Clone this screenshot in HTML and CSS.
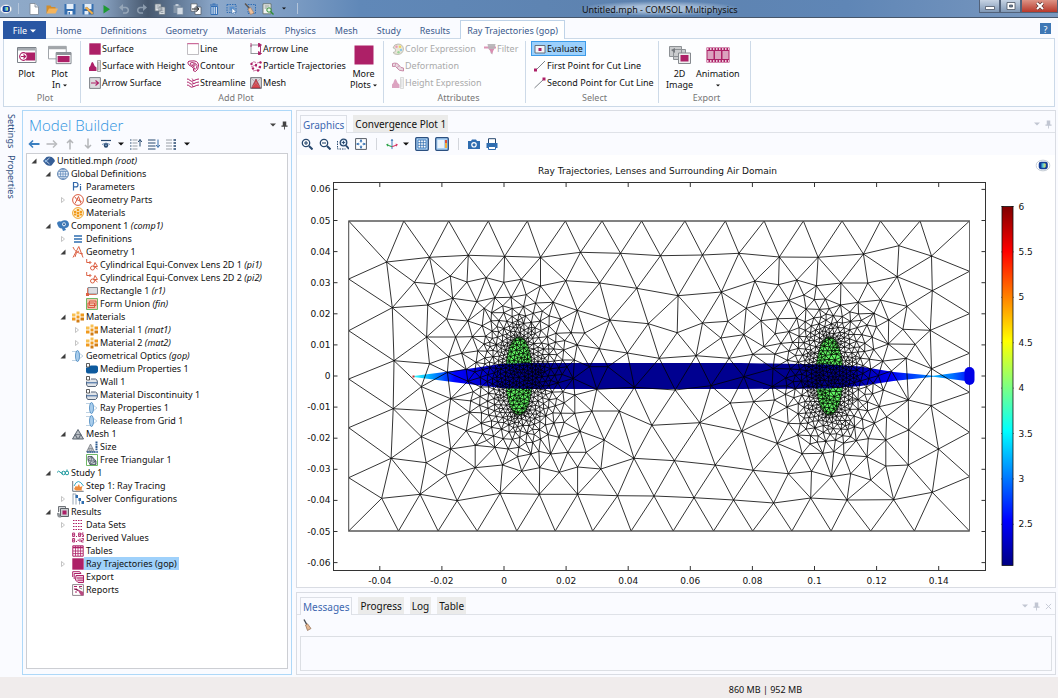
FILE: index.html
```html
<!DOCTYPE html>
<html lang="en">
<head>
<meta charset="utf-8">
<title>Untitled.mph - COMSOL Multiphysics</title>
<link rel="stylesheet" href="styles.css">
</head>
<body>
<svg class="defs" aria-hidden="true">
  <defs>
    <linearGradient id="screen"><stop offset="0" stop-color="#0a2f9a"/><stop offset=".5" stop-color="#58d0e0"/><stop offset="1" stop-color="#f2e04a"/></linearGradient>
    <symbol id="i-logo" viewBox="0 0 14 12"><ellipse cx="7" cy="6" rx="6.500" ry="5" fill="#fff" stroke="#b9c2cd" stroke-width=".8"/><rect x="3" y="2.500" width="8.500" height="7" rx="2" fill="#123c96"/><rect x="4.500" y="3.800" width="5" height="4.200" rx="1" fill="url(#screen)"/></symbol>
    <symbol id="i-new" viewBox="0 0 12 12"><path d="M2 .5h5l3.500 3.500v7.500h-8.500z" fill="#fff" stroke="#7b8794" stroke-width=".8"/><path d="M7 .5v3.500h3.500" fill="#dde3ea" stroke="#7b8794" stroke-width=".8"/></symbol>
    <symbol id="i-open" viewBox="0 0 12 12"><path d="M.5 10.500V2.500h4l1 1.500h4v2" fill="#d08c2c"/><path d="M.5 10.500L3 5.500h9l-2.500 5z" fill="#f4b45c"/></symbol>
    <symbol id="i-save" viewBox="0 0 12 12"><path d="M.5 1h11v10.500h-11z" fill="#356fb0"/><path d="M2.500 1h7v5h-7z" fill="#e4eef8"/><path d="M3.500 8h5v3.500h-5z" fill="#fff"/><path d="M4.500 9h1.500v2.500h-1.500z" fill="#356fb0"/></symbol>
    <symbol id="i-saveas" viewBox="0 0 12 12"><path d="M.5 1h11v10.500h-11z" fill="#356fb0"/><path d="M2.500 1h7v5h-7zM2.500 8h4v3.500h-4z" fill="#e4eef8"/><path d="M3 5l2-1 6.500 6-1.500 1.500z" fill="#f5b44d" stroke="#9d6c2b" stroke-width=".4"/></symbol>
    <symbol id="i-run" viewBox="0 0 12 12"><path d="M3.500 2l6.500 4.300-6.500 4.300z" fill="#1d9a32"/></symbol>
    <symbol id="i-undo" viewBox="0 0 12 12"><path d="M3 4.500h5a2.800 2.800 0 010 5.500h-3" fill="none" stroke="#96a6b8" stroke-width="1.500"/><path d="M1 4.500l4-3.500v7z" fill="#96a6b8"/></symbol>
    <symbol id="i-redo" viewBox="0 0 12 12"><path d="M9 4.500h-5a2.800 2.800 0 000 5.500h3" fill="none" stroke="#8c9cae" stroke-width="1.500"/><path d="M11 4.500l-4-3.500v7z" fill="#8c9cae"/></symbol>
    <symbol id="i-copy" viewBox="0 0 12 12"><path d="M1 1h6v7h-6zM5 4h6v7.500h-6z" fill="#dfe3e7" stroke="#6a7682" stroke-width=".8"/><path d="M6.500 6h3M6.500 7.800h3M6.500 9.600h3M2.500 3h3M2.500 5h2" stroke="#6a7682" stroke-width=".7"/></symbol>
    <symbol id="i-paste" viewBox="0 0 12 12"><path d="M1.500 2h7v8h-7z" fill="#8495a8"/><path d="M3.500 1h3v2h-3z" fill="#c0cbd7"/><path d="M5 4.500h6v7h-6z" fill="#d3dbe4" stroke="#7d8fa3" stroke-width=".7"/></symbol>
    <symbol id="i-dup" viewBox="0 0 12 12"><path d="M1 .8h6v7.500h-6zM5 4h6v7.500h-6z" fill="#fff" stroke="#57616c" stroke-width=".8"/><path d="M2 6h6M6.500 4l2.500 2-2.500 2" fill="none" stroke="#222" stroke-width="1"/></symbol>
    <symbol id="i-trash" viewBox="0 0 12 12"><path d="M2 2h8M4.500 1h3" stroke="#326fb6"/><path d="M3 3.500h6.500v8H3z" fill="#d5e2f1" stroke="#326fb6"/><path d="M5.100 3.500v8M7.300 3.500v8" fill="none" stroke="#326fb6" stroke-width="1"/></symbol>
    <symbol id="i-sel" viewBox="0 0 12 12"><rect x="1" y="1.500" width="9" height="8" fill="none" stroke="#2f6db5" stroke-dasharray="1.500 1"/><path d="M3.500 3.500h5v4h-5z" fill="#5c92cf"/><path d="M6 5v6l1.500-1.500 1 2 1-.5-1-2h2z" fill="#fff" stroke="#3b6ea8" stroke-width=".5"/></symbol>
    <symbol id="i-clear" viewBox="0 0 12 12"><path d="M4 1.500h7.500v9H4z" fill="none" stroke="#2f6db5" stroke-dasharray="1.500 1"/><path d="M1 .5l4.500 5" stroke="#5d554f" stroke-width="1.400"/><path d="M4 6l2.500-1.500 3.500 5.500-3.500 1.500z" fill="#eec19b" stroke="#a77a58" stroke-width=".6"/></symbol>
    <symbol id="i-broom" viewBox="0 0 12 12"><path d="M2 .5l3 5.500" stroke="#474b52" stroke-width="1.400"/><path d="M3.500 6l2-1.200 3.500 4.700-3.500 2z" fill="#e6b893" stroke="#8d6a4e" stroke-width=".7"/></symbol>
    <symbol id="i-find" viewBox="0 0 12 12"><path d="M1 .8h8v10h-8z" fill="#f2f4f2" stroke="#5d6a60" stroke-width=".8"/><path d="M2.500 3h5M2.500 5h3" stroke="#6b7a6e" stroke-width=".8"/><circle cx="7" cy="7" r="2.200" fill="#e2f3e2" stroke="#2f8b35"/><path d="M8.500 8.500l3 3" stroke="#2f8b35" stroke-width="1.400"/></symbol>
    <symbol id="i-plot" viewBox="0 0 20 18"><path d="M.5 1.500h18.500v15h-18.500z" fill="#fff" stroke="#7c8289"/><path d="M1 2h17.500v2.500h-17.500z" fill="#a5aab0"/><path d="M9 6.500h9v8h-9z" fill="#ad2067"/><circle cx="6.500" cy="10.500" r="3.800" fill="#fff" stroke="#ad2067" stroke-width="1.200"/><path d="M4 10.500h4M6.500 8.500l2 2-2 2" fill="none" stroke="#ad2067" stroke-width="1.200"/></symbol>
    <symbol id="i-plotin" viewBox="0 0 25 20"><path d="M.5 1h18.500v13h-18.500z" fill="#fff" stroke="#9a9fa4"/><path d="M.5 1h18.500v3h-18.500z" fill="#a2a6aa"/><path d="M8.500 7.500h15.500v11.500h-15.500z" fill="#fff" stroke="#7c8289"/><path d="M8.500 7.500h15.500v2.500h-15.500z" fill="#8f9499"/><path d="M10 11h12.500v6.500h-12.500z" fill="#ad2067"/></symbol>
    <symbol id="i-surface" viewBox="0 0 12 12"><path d="M.3 .3h11.400v11.400h-11.400z" fill="#ad2067"/></symbol>
    <symbol id="i-height" viewBox="0 0 12 12"><path d="M0 11V7.500q1.500-1 2-3.500 1.300-4 2.800 0 .5 2.500 2.700 3.500V11z" fill="#ad2067"/><path d="M8.500.5h3v11h-3z" fill="#e2e2e2" stroke="#888" stroke-width=".7"/><path d="M8.500 3h2M8.500 5h2M8.500 7h2M8.500 9h2" stroke="#777" stroke-width=".6"/></symbol>
    <symbol id="i-arrows" viewBox="0 0 12 12"><path d="M.6 .6h10.800v10.800h-10.800z" fill="#dcdcdf" stroke="#7e8388"/><path d="M2 6h7M6.500 3.500l3 2.500-3 2.500" fill="none" stroke="#ad2067" stroke-width="1.100"/></symbol>
    <symbol id="i-line" viewBox="0 0 12 12"><path d="M11.500 1v10.500h-11v-10.500" fill="#fff" stroke="#b0adb2" stroke-width=".8"/><path d="M.2 .7h11.600" stroke="#c04a84"/></symbol>
    <symbol id="i-contour" viewBox="0 0 12 12"><path d="M2 5q-3-4 2-4 7-1 7.500 4 0 5-3 6.500-3 0-2-3-1-2-4.500-3.500z" fill="none" stroke="#ad2067"/><path d="M3.500 4.500q-1-2 1.500-2 4.500 0 5 3 0 3-2 4-1-2-2-3.500z" fill="none" stroke="#ad2067" stroke-width=".9"/><circle cx="7" cy="5" r="1.200" fill="none" stroke="#ad2067" stroke-width=".9"/></symbol>
    <symbol id="i-stream" viewBox="0 0 12 12"><path d="M0 2q2 0 3 1.500t4 0T12 2M0 5q2 0 3 1.500t4 0T12 5M0 8q2 0 3 1.500t4 0T12 8" fill="none" stroke="#ad2067"/><path d="M5 1.500l1.500 2M5 4.500l1.500 2M5 8l1.500 2" stroke="#ad2067" stroke-width=".8"/></symbol>
    <symbol id="i-arrowline" viewBox="0 0 12 12"><path d="M1 11V2h10M1 10.500h9.500v-8" fill="none" stroke="#888b90" stroke-width=".9"/><path d="M8.500 0l3 2-3 2zM8.500 8.500l3 2-3 2zM1 0v4M10.500 3v6" fill="#ad2067" stroke="#ad2067" stroke-width=".8"/></symbol>
    <symbol id="i-particle" viewBox="0 0 12 12"><path d="M1 3.500q3-3 5-1M1 7q4-3 6 0M3 11q3-1 7-1M7 3l4-1M8 7l3 1" fill="none" stroke="#c25a90" stroke-width=".8"/><g fill="#ad2067"><circle cx="1.500" cy="4" r="1.200"/><circle cx="6" cy="5" r="1.200"/><circle cx="10.500" cy="2.500" r="1.200"/><circle cx="3" cy="8.500" r="1.200"/><circle cx="10" cy="7" r="1.200"/><circle cx="8" cy="10.500" r="1.200"/></g></symbol>
    <symbol id="i-meshplot" viewBox="0 0 12 12"><path d="M.6 .6h10.800v10.800h-10.800z" fill="#d9d9dd" stroke="#777b80"/><path d="M6 2l4.500 9h-9z" fill="#d9484f" stroke="#7d2338" stroke-width=".6"/><path d="M1 1l10 10M11 1L1 11" stroke="#a98890" stroke-width=".5"/></symbol>
    <symbol id="i-color" viewBox="0 0 12 12"><path d="M6 1q5 0 5.500 5-.5 5-5.500 5.500-4 0-5-2 3 0 2.500-2.500T1 5Q2 1 6 1z" fill="#e9e6d6" stroke="#a9a9a0" stroke-width=".7"/><circle cx="4.500" cy="3.800" r="1.200" fill="#ea9ab7"/><circle cx="8" cy="3.800" r="1.200" fill="#f0d65c"/><circle cx="9" cy="7" r="1.200" fill="#8fc8e8"/><circle cx="6.500" cy="9.300" r="1.200" fill="#9bd59a"/></symbol>
    <symbol id="i-deform" viewBox="0 0 12 12"><path d="M.5 3.500q5-1.500 7 2.500 1 2 4 2v3q-5 0-6.500-3-1-2.500-4.500-1.500z" fill="#eadbe2" stroke="#c98aa8"/><path d="M4 3l-1 3M7.500 5.500l-2.500 2" stroke="#c98aa8" stroke-width=".7"/></symbol>
    <symbol id="i-filter" viewBox="0 0 12 12"><path d="M0 3.500h12v2h-12z" fill="#dc95b6"/><path d="M3.500 1h8l-1 5-2 1.500v4l-2-1.500v-2.500l-2-1.500z" fill="#b6b2b6" opacity=".9"/><path d="M5 6h5l-2 5z" fill="#da8db1"/></symbol>
    <symbol id="i-eval" viewBox="0 0 12 12"><path d="M1 2.500h10v7.500h-10z" fill="#f3f5f8" stroke="#66717c"/><path d="M4.500 5h3v3h-3z" fill="#ad2067"/></symbol>
    <symbol id="i-cut1" viewBox="0 0 12 12"><path d="M1.500 10.500L11 1" stroke="#7e8388"/><path d="M0 8.500h3v3h-3z" fill="#ad2067"/></symbol>
    <symbol id="i-cut2" viewBox="0 0 12 12"><path d="M.5 11L10 2" stroke="#7e8388"/><path d="M8.500 .5h3v3h-3z" fill="#ad2067"/></symbol>
    <symbol id="i-image" viewBox="0 0 22 18"><path d="M.5 .5h12v10h-12zM4.500 3.500h12v10h-12z" fill="#c9cbcd" stroke="#8d9195"/><path d="M2 4l4-2v5z" fill="#75797e"/><path d="M9.500 7h12v10.500h-12z" fill="#eee" stroke="#85898e"/><path d="M11.500 9h8v6.500h-8z" fill="#ad2067"/></symbol>
    <symbol id="i-film" viewBox="0 0 24 16"><path d="M.5 .5h23v15h-23z" fill="#ad2067"/><path d="M1.500 4h6v8h-6zM9 4h6v8h-6zM16.500 4h6v8h-6z" fill="#dba3bf"/><path d="M1 2h22M1 14h22" stroke="#fff" stroke-width="1.600" stroke-dasharray="1.500 1.500"/></symbol>
    <symbol id="i-left" viewBox="0 0 12 12"><path d="M2 6h9.500" stroke="#3b7fc0" stroke-width="2"/><path d="M5 2.500L1.500 6 5 9.500" fill="none" stroke="#3b7fc0" stroke-width="1.600"/></symbol>
    <symbol id="i-right" viewBox="0 0 12 12"><path d="M.5 6h9.500" stroke="#b9bbbe" stroke-width="1.600"/><path d="M7 2.500L10.500 6 7 9.500" fill="none" stroke="#b9bbbe" stroke-width="1.500"/></symbol>
    <symbol id="i-up" viewBox="0 0 12 12"><path d="M6 2v9.500M3 5l3-3 3 3" fill="none" stroke="#b4b6b9" stroke-width="1.500"/></symbol>
    <symbol id="i-down" viewBox="0 0 12 12"><path d="M6 .5V10M3 7l3 3 3-3" fill="none" stroke="#b4b6b9" stroke-width="1.500"/></symbol>
    <symbol id="i-eye" viewBox="0 0 12 12"><path d="M1 2.500h10" stroke="#27486f" stroke-width="1.200"/><path d="M2 6.500q4-3 8 0" fill="none" stroke="#6f90b8"/><circle cx="6" cy="7.500" r="2.200" fill="#27486f"/><circle cx="6" cy="7.300" r=".8" fill="#9fc0e4"/></symbol>
    <symbol id="i-expand" viewBox="0 0 12 12"><path d="M0 2h1.500M0 5h1.500M0 8h1.500M0 11h1.500" stroke="#27486f"/><path d="M2.500 2h5M2.500 5h5M2.500 8h5M2.500 11h5" stroke="#999fa6"/><path d="M10 1.500v7M8.200 4L10 1.500 11.800 4" fill="none" stroke="#27486f"/></symbol>
    <symbol id="i-collapse" viewBox="0 0 12 12"><path d="M0 2h7.500M0 5h7.500M0 8h7.500M0 11h7.500" stroke="#27486f"/><path d="M10 1.500V9M8.200 7L10 9.500 11.800 7" fill="none" stroke="#3b6ea8"/></symbol>
    <symbol id="i-cols" viewBox="0 0 12 12"><path d="M0 2h6M0 5h6M0 8h6M0 11h6" stroke="#999fa6"/><path d="M7.500 2h2.500M7.500 5h2.500M7.500 8h2.500M7.500 11h2.500" stroke="#27486f" stroke-width="1.400"/></symbol>
    <symbol id="i-caret" viewBox="0 0 6 4"><path d="M0 .5h6L3 3.500z" fill="currentColor"/></symbol>
    <symbol id="i-pin" viewBox="0 0 8 10"><path d="M2 .5h4v4.500h1.500v1.500h-7v-1.500h1.500zM3.500 6h1v3.500h-1z" fill="currentColor"/></symbol>
    <symbol id="i-open-node" viewBox="0 0 6 6"><path d="M5.500 .5v5h-5z" fill="#3d3d3d"/></symbol>
    <symbol id="i-closed-node" viewBox="0 0 6 6"><path d="M1.500 .5l3 2.500-3 2.500z" fill="#fff" stroke="#b5b5b5" stroke-width=".8"/></symbol>
    <symbol id="t-root" viewBox="0 0 12 12"><path d="M0 6l3.500-4Q8 .5 11 4l1 2-3.500 4.500q-3 1-5.500-1z" fill="#365e96"/><path d="M3 6l3.500-3M3 6l3.500 3" stroke="#dfeaf6" stroke-width=".8"/><circle cx="3" cy="6" r="1.300" fill="#8db5df"/></symbol>
    <symbol id="t-globe" viewBox="0 0 12 12"><circle cx="6" cy="6" r="5.400" fill="#edf3fa" stroke="#537aab"/><ellipse cx="6" cy="6" rx="2.500" ry="5" fill="none" stroke="#6a90bf" stroke-width=".8"/><path d="M6 1v10M1 6h10M2 3.500h8M2 8.500h8" stroke="#6a90bf" stroke-width=".8"/></symbol>
    <symbol id="t-pi" viewBox="0 0 12 12"><path d="M1.500 9.500v-8h2.500q2 0 2 2.200t-2 2.200h-2.500M8.500 5v4.500M8.500 3v1" fill="none" stroke="#2f66a8" stroke-width="1.200"/></symbol>
    <symbol id="t-geomp" viewBox="0 0 12 12"><circle cx="6" cy="6" r="5.400" fill="#fff" stroke="#d95b3f"/><path d="M2.500 2.500q1.500 4 7 5M3 9.500L6.500 2.500l2.500 7" fill="none" stroke="#d95b3f" stroke-width="1"/></symbol>
    <symbol id="t-matc" viewBox="0 0 12 12"><circle cx="6" cy="6" r="5.400" fill="#fff4dc" stroke="#eda431"/><path d="M4.800 2h2.400v2.300h-2.400zM4.800 4.900h2.400v2.300h-2.400zM4.800 7.800h2.400v2.300h-2.400zM2 3.800h2.300v2.100h-2.300zM2 6.500h2.300v2.100h-2.300zM7.700 3.800h2.300v2.100h-2.300zM7.700 6.500h2.300v2.100h-2.300z" fill="#f09a1c"/></symbol>
    <symbol id="t-mat" viewBox="0 0 12 12"><path d="M4.500 .5h3v3h-3zM0 2.500h3.500v3h-3.500z" fill="#f8c052"/><path d="M4.500 4.500h3v3h-3zM8.500 2.500h3.500v3h-3.500zM0 6.500h3.500v3h-3.500z" fill="#f0991d"/><path d="M4.500 8.500h3v3h-3zM8.500 6.500h3.500v3h-3.500z" fill="#d17c14"/></symbol>
    <symbol id="t-comp" viewBox="0 0 12 12"><path d="M0 3q1-2.500 4-1.500Q8-1 11 1.500q2 3 0 5.500-1 1-3 1l1 2-3 1-1-2.500Q1 8.500 0 3z" fill="#3d79b8"/><ellipse cx="7" cy="4.300" rx="1.800" ry="2.100" fill="#e4eef8"/><circle cx="7" cy="4.300" r="1" fill="#2b5c94"/></symbol>
    <symbol id="t-defs" viewBox="0 0 12 12"><path d="M2 3h8M2 6h8M2 9h8" stroke="#2f6db0" stroke-width="1.700"/></symbol>
    <symbol id="t-geom" viewBox="0 0 12 12"><path d="M1 1q2 6 10 7M1 11.500L6.800.5l4.200 11M3 11q1-6 4-6" fill="none" stroke="#dc6144" stroke-width="1"/></symbol>
    <symbol id="t-part" viewBox="0 0 12 12"><path d="M.7 0v3.500h4M3.500 2l1.500 1.500L3.500 5M5 8h3" fill="none" stroke="#dc6144"/><path d="M9 3.500l2.500 4h-4z" fill="none" stroke="#dc6144"/><circle cx="6.500" cy="9" r="2" fill="#fff" stroke="#dc6144"/><path d="M9 8l2.500 2" stroke="#dc6144"/></symbol>
    <symbol id="t-rect" viewBox="0 0 12 12"><path d="M2 2.500h9.500v6.500h-9.500z" fill="#dcdde2" stroke="#858a92"/><path d="M1.500 3v6.500h9" fill="none" stroke="#dc6144" stroke-width=".8"/><path d="M0 8h3v3h-3z" fill="#dc6144"/></symbol>
    <symbol id="t-union" viewBox="0 0 12 12"><path d="M.5 .5h11v11h-11z" fill="#f4c2ad" stroke="#6fb865"/><path d="M2 5h6.500v4.500h-6.500zM3.500 3H10v4.500H3.500z" fill="none" stroke="#d65239" stroke-width=".9"/></symbol>
    <symbol id="t-lens" viewBox="0 0 12 12"><path d="M0 1.500h5l6 4.500-6 4.500H0" fill="none" stroke="#b7cde0" stroke-width=".9"/><ellipse cx="5.500" cy="6" rx="2" ry="5.500" fill="#a9cdec" stroke="#4686bf" stroke-width=".8"/></symbol>
    <symbol id="t-medium" viewBox="0 0 12 12"><path d="M0 4.500Q4 5 4.500 2.500H10q2 0 2 2v4q-1 2-3 2H2q-2 0-2-2z" fill="#0d5a9e"/><path d="M.5 .5h3v3.500h-3z" fill="#fff" stroke="#333" stroke-width=".8"/></symbol>
    <symbol id="t-wall" viewBox="0 0 12 12"><path d="M5 3h4.500q2 .5 2 3.500t-2 4h-7.500q-1.500-.5-1.500-2.500V5.500" fill="#dfe3e8" stroke="#56657a"/><path d="M.5 6.800h11" stroke="#2f5f9b"/><path d="M.5 .5h3v3.500h-3z" fill="#fff" stroke="#333" stroke-width=".8"/></symbol>
    <symbol id="t-mesh" viewBox="0 0 12 12"><path d="M6 1.500l5.500 9.500H.5z" fill="#b9bec4" stroke="#5b6671"/><path d="M3.200 6.500h5.600L6 11zM3.200 6.500l2 4.500M8.800 6.500l-2 4.500" fill="none" stroke="#5b6671" stroke-width=".7"/></symbol>
    <symbol id="t-size" viewBox="0 0 12 12"><path d="M4.500 3l4 8H.5z" fill="#c3c6ca" stroke="#737980" stroke-width=".8"/><path d="M2.500 7.500h4L4.500 11z" fill="none" stroke="#737980" stroke-width=".6"/><path d="M10.500 .5v9" stroke="#2d5c92" stroke-width="2" stroke-dasharray="1.800 .5"/><path d="M1 11h11" stroke="#2d5c92" stroke-width="1.500" stroke-dasharray="1.800 .5"/></symbol>
    <symbol id="t-freetri" viewBox="0 0 12 12"><path d="M.5 .5h11v11h-11z" fill="#fff" stroke="#6fb865"/><path d="M2 2.500l4 0 4 4.500v3.500H4L2 6z" fill="#cbd0d6" stroke="#3f4b57" stroke-width=".8"/><path d="M2 6l4-3.500L5 7l5 0-6 3.500L5 7 2 6M6 3l4 7" fill="none" stroke="#3f4b57" stroke-width=".6"/></symbol>
    <symbol id="t-study" viewBox="0 0 12 12"><path d="M0 5.500Q1.500 3 3 5t3 1" fill="none" stroke="#1f9aa0"/><circle cx="6.500" cy="6" r="1.800" fill="none" stroke="#1f9aa0"/><circle cx="10" cy="6" r="1.800" fill="none" stroke="#1f9aa0"/><path d="M10 4V2.500" stroke="#1f9aa0"/></symbol>
    <symbol id="t-step" viewBox="0 0 12 12"><path d="M.7 1v10.300h11" fill="none" stroke="#6f7780"/><path d="M2 6q4-9 9.500 0" fill="none" stroke="#35a8c4"/><path d="M2 9l2-3.500 1 1.500 2-3 1 3 2.500-1-1 3.500 1 1H4z" fill="#ef8c3c"/></symbol>
    <symbol id="t-solver" viewBox="0 0 12 12"><path d="M1 .5v11M1 1h3M4 1v10.500" fill="none" stroke="#8292a4" stroke-width=".8"/><path d="M3.500 2h2.500v3h-2.500zM6.500 5h2.500v3h-2.500zM9.500 8h2.500v3h-2.500z" fill="#2f6db0"/><path d="M7.500 8v3.500" stroke="#8292a4" stroke-width=".8"/></symbol>
    <symbol id="t-results" viewBox="0 0 12 12"><path d="M1.500 6V.5h7v2" fill="#d5d7da" stroke="#6f7378"/><path d="M3.500 2.500h8v8h-8z" fill="#c9ccd0" stroke="#5f6368"/><path d="M5.500 4.500h4v4h-4z" fill="#ad2067"/><path d="M0 7q3-1 3 2t4 2.500H2Q0 11 0 7z" fill="#8e9398"/></symbol>
    <symbol id="t-data" viewBox="0 0 12 12"><path d="M1 1.500h10M1 4.500h10M1 7.500h10M1 10.500h10" stroke="#ad2067" stroke-width="1.200" stroke-dasharray="1.500 1"/></symbol>
    <symbol id="t-derived" viewBox="0 0 12 12"><path d="M.6 1h2v3.500h-2zM.6 2.800h2M6.600 1h2v3.500h-2zM6.600 2.800h2M.6 6.500h2V10h-2zM.6 8.200h2M11.500 1H10v1.800h1.500v1.700H10M9.500 6.500h2v1.700h-2V10h2" fill="none" stroke="#ad2067" stroke-width=".9"/><path d="M4 4.500h1M4 9.500h1M5.500 8.200h1.500M8 6.500V10" stroke="#ad2067"/></symbol>
    <symbol id="t-table" viewBox="0 0 12 12"><path d="M.8 .8h10.400v10.400H.8z" fill="#fff" stroke="#ad2067"/><path d="M1 2.500h10" stroke="#ad2067" stroke-width="1.600"/><path d="M1 6h10M1 8.600h10M3.500 1v10M6 1v10M8.600 1v10" stroke="#ad2067" stroke-width=".8"/></symbol>
    <symbol id="t-export" viewBox="0 0 12 12"><path d="M.7 6V.7h7l1 1.500M2.200 8V2.500h7" fill="none" stroke="#ad2067"/><path d="M4 4.500h7.500v7H6L3.500 9z" fill="#f0cfde" stroke="#ad2067"/><path d="M5 7h6M5.500 9.200h6" stroke="#ad2067"/></symbol>
    <symbol id="t-report" viewBox="0 0 12 12"><path d="M.6 .6h10.800v10.800H.6z" fill="#fff" stroke="#92878e"/><path d="M2 2.500h3M7 2.500h3M2 5h3l1 2M3 8h2" stroke="#ad2067"/><path d="M5 5l6.500 3v3.500H9z" fill="#b94a80"/><path d="M7 3.500l3 1.500" stroke="#777"/></symbol>
    <symbol id="g-zin" viewBox="0 0 12 12"><circle cx="5" cy="5" r="3.700" fill="#fff" stroke="#27486f" stroke-width="1.300"/><path d="M8 8l3.500 3.500" stroke="#27486f" stroke-width="2"/><path d="M3 5h4M5 3v4" stroke="#27486f" stroke-width="1.100"/></symbol>
    <symbol id="g-zout" viewBox="0 0 12 12"><circle cx="5" cy="5" r="3.700" fill="#fff" stroke="#27486f" stroke-width="1.300"/><path d="M8 8l3.500 3.500" stroke="#27486f" stroke-width="2"/><path d="M3 5h4" stroke="#27486f" stroke-width="1.100"/></symbol>
    <symbol id="g-zbox" viewBox="0 0 12 12"><path d="M.5 3v8h8" fill="none" stroke="#27486f" stroke-dasharray="1.500 1"/><circle cx="6.500" cy="4.500" r="3.300" fill="#dbe8f5" stroke="#27486f" stroke-width="1.300"/><path d="M4.800 4.500h3.400M6.500 2.800v3.400" stroke="#27486f" stroke-width=".9"/><path d="M9 7.500l3 3.500" stroke="#27486f" stroke-width="1.900"/></symbol>
    <symbol id="g-fit" viewBox="0 0 12 12"><path d="M.6 .6h10.800v10.800H.6z" fill="#fff" stroke="#555c66"/><path d="M6 1.500v9M1.500 6h9" stroke="#2f6db0" stroke-dasharray="3 3"/><path d="M4.500 3.500L6 1.500l1.500 2zM4.500 8.500L6 10.500l1.500-2zM3.500 4.500L1.500 6l2 1.500zM8.500 4.500l2 1.500-2 1.500z" fill="#2f6db0"/></symbol>
    <symbol id="g-axes" viewBox="0 0 13 12"><path d="M6.500 1v8" stroke="#3672b4"/><path d="M5 2.500L6.500.5 8 2.500z" fill="#3672b4"/><path d="M6.500 9L1.500 7" stroke="#2fa54b" stroke-width="1.100"/><path d="M2.500 5.500L0 6.500l2 2.500z" fill="#2fa54b"/><path d="M6.500 9l5-2" stroke="#d83a68" stroke-width="1.100"/><path d="M10.500 5.500L13 6.500l-2 2.500z" fill="#d83a68"/><path d="M6.500 9v2.500" stroke="#3672b4"/></symbol>
    <symbol id="g-grid" viewBox="0 0 14 14"><rect x=".7" y=".7" width="12.600" height="12.600" rx="1" fill="#a9d0f5" stroke="#2a4f80" stroke-width="1.300"/><path d="M3 3h8v8H3z" fill="#fff"/><path d="M3 3h8v8H3zM5.700 3v8M8.300 3v8M3 5.700h8M3 8.300h8" fill="none" stroke="#2f6db0" stroke-width=".8"/></symbol>
    <symbol id="g-legend" viewBox="0 0 14 14"><rect x=".7" y=".7" width="12.600" height="12.600" rx="1" fill="#a9d0f5" stroke="#2a4f80" stroke-width="1.300"/><path d="M2.500 3h6.500v8H2.500z" fill="#eaf3fb"/><path d="M10 3h2v3h-2z" fill="#e04f36"/><path d="M10 6h2v5h-2z" fill="#f2b03c"/></symbol>
    <symbol id="g-camera" viewBox="0 0 12 12"><path d="M0 3h3l1-1.500h4L9 3h3v8H0z" fill="#2f6db0"/><circle cx="6" cy="6.800" r="2.800" fill="#fff"/><circle cx="6" cy="6.800" r="1.600" fill="#2f6db0"/></symbol>
    <symbol id="g-print" viewBox="0 0 12 12"><path d="M2.500 .7h7v5h-7z" fill="#fff" stroke="#27486f"/><path d="M.5 5h11v5H.5z" fill="#2f6db0"/><path d="M2.500 8.500h7v3h-7z" fill="#fff" stroke="#2f6db0"/></symbol>
  </defs>
</svg>

<header class="titlebar">
  <div class="quick">
    <svg class="ico"><use href="#i-logo"/></svg><span class="qsep"></span>
    <button aria-label="New"><svg class="ico"><use href="#i-new"/></svg></button>
    <button aria-label="Open"><svg class="ico"><use href="#i-open"/></svg></button>
    <button aria-label="Save"><svg class="ico"><use href="#i-save"/></svg></button>
    <button aria-label="Save as"><svg class="ico"><use href="#i-saveas"/></svg></button>
    <button aria-label="Run"><svg class="ico"><use href="#i-run"/></svg></button>
    <button aria-label="Undo"><svg class="ico"><use href="#i-undo"/></svg></button>
    <button aria-label="Redo"><svg class="ico"><use href="#i-redo"/></svg></button>
    <button aria-label="Copy"><svg class="ico"><use href="#i-copy"/></svg></button>
    <button aria-label="Paste"><svg class="ico"><use href="#i-paste"/></svg></button>
    <button aria-label="Duplicate"><svg class="ico"><use href="#i-dup"/></svg></button>
    <button aria-label="Delete"><svg class="ico"><use href="#i-trash"/></svg></button>
    <button aria-label="Select"><svg class="ico"><use href="#i-sel"/></svg></button>
    <button aria-label="Clear"><svg class="ico"><use href="#i-clear"/></svg></button>
    <button aria-label="Find"><svg class="ico"><use href="#i-find"/></svg></button>
    <button aria-label="Customize" class="narrow"><svg class="mini"><use href="#i-caret"/></svg></button><span class="qsep"></span>
  </div>
  <h1 class="wintitle">Untitled.mph - COMSOL Multiphysics</h1>
  <div class="winbtns">
    <button aria-label="Minimize"><svg viewBox="0 0 12 10"><path d="M1.500 5.500h9v3h-9z" fill="#fff" stroke="#4b5665" stroke-width=".8"/></svg></button>
    <button aria-label="Maximize"><svg viewBox="0 0 12 10"><path d="M2 1.500h8v7H2z" fill="#fff" stroke="#4b5665" stroke-width=".8"/><path d="M4.500 4h3v2h-3z" fill="#6b7d93" stroke="#4b5665" stroke-width=".8"/></svg></button>
    <button aria-label="Close" class="close"><svg viewBox="0 0 12 10"><path d="M3 2l6 6M9 2L3 8" stroke="#5b3430" stroke-width="3.200"/><path d="M3 2l6 6M9 2L3 8" stroke="#fff" stroke-width="2"/></svg></button>
  </div>
</header>

<nav class="tabs" aria-label="Ribbon tabs">
  <button class="file">File <svg class="caret"><use href="#i-caret"/></svg></button>
  <button>Home</button><button>Definitions</button><button>Geometry</button><button>Materials</button><button>Physics</button><button>Mesh</button><button>Study</button><button>Results</button><button class="on">Ray Trajectories (gop)</button>
  <button class="help" aria-label="Help">?</button>
</nav>

<section class="ribbon" aria-label="Ribbon">
  <div class="group g-plot">
    <div class="cmds">
      <button class="big"><svg class="w20"><use href="#i-plot"/></svg><span>Plot</span></button>
      <button class="big"><svg class="w24"><use href="#i-plotin"/></svg><span>Plot<br>In <svg class="mini"><use href="#i-caret"/></svg></span></button>
    </div>
    <h2>Plot</h2>
  </div>
  <div class="group g-add">
    <div class="cmds">
      <div class="col c1">
        <button><svg class="ico"><use href="#i-surface"/></svg>Surface</button>
        <button><svg class="ico"><use href="#i-height"/></svg>Surface with Height</button>
        <button><svg class="ico"><use href="#i-arrows"/></svg>Arrow Surface</button>
      </div>
      <div class="col c2">
        <button><svg class="ico"><use href="#i-line"/></svg>Line</button>
        <button><svg class="ico"><use href="#i-contour"/></svg>Contour</button>
        <button><svg class="ico"><use href="#i-stream"/></svg>Streamline</button>
      </div>
      <div class="col c3">
        <button><svg class="ico"><use href="#i-arrowline"/></svg>Arrow Line</button>
        <button><svg class="ico"><use href="#i-particle"/></svg>Particle Trajectories</button>
        <button><svg class="ico"><use href="#i-meshplot"/></svg>Mesh</button>
      </div>
      <button class="big"><svg class="w20"><use href="#i-surface"/></svg><span>More<br>Plots <svg class="mini"><use href="#i-caret"/></svg></span></button>
    </div>
    <h2>Add Plot</h2>
  </div>
  <div class="group g-attr">
    <div class="cmds">
      <div class="col c4">
        <button disabled><svg class="ico"><use href="#i-color"/></svg>Color Expression</button>
        <button disabled><svg class="ico"><use href="#i-deform"/></svg>Deformation</button>
        <button disabled><svg class="ico dim"><use href="#i-height"/></svg>Height Expression</button>
      </div>
      <div class="col"><button disabled><svg class="ico"><use href="#i-filter"/></svg>Filter</button></div>
    </div>
    <h2>Attributes</h2>
  </div>
  <div class="group g-sel">
    <div class="cmds">
      <div class="col">
        <button class="active"><svg class="ico"><use href="#i-eval"/></svg>Evaluate</button>
        <button><svg class="ico"><use href="#i-cut1"/></svg>First Point for Cut Line</button>
        <button><svg class="ico"><use href="#i-cut2"/></svg>Second Point for Cut Line</button>
      </div>
    </div>
    <h2>Select</h2>
  </div>
  <div class="group g-exp">
    <div class="cmds">
      <button class="big"><svg class="w22"><use href="#i-image"/></svg><span>2D<br>Image</span></button>
      <button class="big"><svg class="w24"><use href="#i-film"/></svg><span>Animation<br><svg class="mini"><use href="#i-caret"/></svg></span></button>
    </div>
    <h2>Export</h2>
  </div>
</section>

<main class="work">
  <aside class="rail"><button>Settings</button><button>Properties</button></aside>

  <section class="builder">
    <header><h2>Model Builder</h2><svg class="caret"><use href="#i-caret"/></svg><svg class="pin"><use href="#i-pin"/></svg></header>
    <div class="btools">
      <button aria-label="Back"><svg class="ico"><use href="#i-left"/></svg></button>
      <button aria-label="Forward"><svg class="ico"><use href="#i-right"/></svg></button>
      <button aria-label="Move up"><svg class="ico"><use href="#i-up"/></svg></button>
      <button aria-label="Move down"><svg class="ico"><use href="#i-down"/></svg></button>
      <button aria-label="Show"><svg class="ico"><use href="#i-eye"/></svg><svg class="caret"><use href="#i-caret"/></svg></button>
      <button aria-label="Expand"><svg class="ico"><use href="#i-expand"/></svg></button>
      <button aria-label="Collapse"><svg class="ico"><use href="#i-collapse"/></svg></button>
      <button aria-label="Node text"><svg class="ico"><use href="#i-cols"/></svg><svg class="caret"><use href="#i-caret"/></svg></button>
    </div>
    <ul class="tree" role="tree">
      <li class="d0" role="treeitem"><svg class="tw"><use href="#i-open-node"/></svg><svg class="ico"><use href="#t-root"/></svg><span>Untitled.mph <i>(root)</i></span></li>
      <li class="d1" role="treeitem"><svg class="tw"><use href="#i-open-node"/></svg><svg class="ico"><use href="#t-globe"/></svg><span>Global Definitions</span></li>
      <li class="d2" role="treeitem"><svg class="tw"></svg><svg class="ico"><use href="#t-pi"/></svg><span>Parameters</span></li>
      <li class="d2" role="treeitem"><svg class="tw"><use href="#i-closed-node"/></svg><svg class="ico"><use href="#t-geomp"/></svg><span>Geometry Parts</span></li>
      <li class="d2" role="treeitem"><svg class="tw"></svg><svg class="ico"><use href="#t-matc"/></svg><span>Materials</span></li>
      <li class="d1" role="treeitem"><svg class="tw"><use href="#i-open-node"/></svg><svg class="ico"><use href="#t-comp"/></svg><span>Component 1 <i>(comp1)</i></span></li>
      <li class="d2" role="treeitem"><svg class="tw"><use href="#i-closed-node"/></svg><svg class="ico"><use href="#t-defs"/></svg><span>Definitions</span></li>
      <li class="d2" role="treeitem"><svg class="tw"><use href="#i-open-node"/></svg><svg class="ico"><use href="#t-geom"/></svg><span>Geometry 1</span></li>
      <li class="d3" role="treeitem"><svg class="tw"></svg><svg class="ico"><use href="#t-part"/></svg><span>Cylindrical Equi-Convex Lens 2D 1 <i>(pi1)</i></span></li>
      <li class="d3" role="treeitem"><svg class="tw"></svg><svg class="ico"><use href="#t-part"/></svg><span>Cylindrical Equi-Convex Lens 2D 2 <i>(pi2)</i></span></li>
      <li class="d3" role="treeitem"><svg class="tw"></svg><svg class="ico"><use href="#t-rect"/></svg><span>Rectangle 1 <i>(r1)</i></span></li>
      <li class="d3" role="treeitem"><svg class="tw"></svg><svg class="ico"><use href="#t-union"/></svg><span>Form Union <i>(fin)</i></span></li>
      <li class="d2" role="treeitem"><svg class="tw"><use href="#i-open-node"/></svg><svg class="ico"><use href="#t-mat"/></svg><span>Materials</span></li>
      <li class="d3" role="treeitem"><svg class="tw"><use href="#i-closed-node"/></svg><svg class="ico"><use href="#t-mat"/></svg><span>Material 1 <i>(mat1)</i></span></li>
      <li class="d3" role="treeitem"><svg class="tw"><use href="#i-closed-node"/></svg><svg class="ico"><use href="#t-mat"/></svg><span>Material 2 <i>(mat2)</i></span></li>
      <li class="d2" role="treeitem"><svg class="tw"><use href="#i-open-node"/></svg><svg class="ico"><use href="#t-lens"/></svg><span>Geometrical Optics <i>(gop)</i></span></li>
      <li class="d3" role="treeitem"><svg class="tw"></svg><svg class="ico"><use href="#t-medium"/></svg><span>Medium Properties 1</span></li>
      <li class="d3" role="treeitem"><svg class="tw"></svg><svg class="ico"><use href="#t-wall"/></svg><span>Wall 1</span></li>
      <li class="d3" role="treeitem"><svg class="tw"></svg><svg class="ico"><use href="#t-wall"/></svg><span>Material Discontinuity 1</span></li>
      <li class="d3" role="treeitem"><svg class="tw"></svg><svg class="ico"><use href="#t-lens"/></svg><span>Ray Properties 1</span></li>
      <li class="d3" role="treeitem"><svg class="tw"></svg><svg class="ico"><use href="#t-lens"/></svg><span>Release from Grid 1</span></li>
      <li class="d2" role="treeitem"><svg class="tw"><use href="#i-open-node"/></svg><svg class="ico"><use href="#t-mesh"/></svg><span>Mesh 1</span></li>
      <li class="d3" role="treeitem"><svg class="tw"></svg><svg class="ico"><use href="#t-size"/></svg><span>Size</span></li>
      <li class="d3" role="treeitem"><svg class="tw"></svg><svg class="ico"><use href="#t-freetri"/></svg><span>Free Triangular 1</span></li>
      <li class="d1" role="treeitem"><svg class="tw"><use href="#i-open-node"/></svg><svg class="ico"><use href="#t-study"/></svg><span>Study 1</span></li>
      <li class="d2" role="treeitem"><svg class="tw"></svg><svg class="ico"><use href="#t-step"/></svg><span>Step 1: Ray Tracing</span></li>
      <li class="d2" role="treeitem"><svg class="tw"><use href="#i-closed-node"/></svg><svg class="ico"><use href="#t-solver"/></svg><span>Solver Configurations</span></li>
      <li class="d1" role="treeitem"><svg class="tw"><use href="#i-open-node"/></svg><svg class="ico"><use href="#t-results"/></svg><span>Results</span></li>
      <li class="d2" role="treeitem"><svg class="tw"><use href="#i-closed-node"/></svg><svg class="ico"><use href="#t-data"/></svg><span>Data Sets</span></li>
      <li class="d2" role="treeitem"><svg class="tw"></svg><svg class="ico"><use href="#t-derived"/></svg><span>Derived Values</span></li>
      <li class="d2" role="treeitem"><svg class="tw"></svg><svg class="ico"><use href="#t-table"/></svg><span>Tables</span></li>
      <li class="d2 selected" role="treeitem" aria-selected="true"><svg class="tw"><use href="#i-closed-node"/></svg><svg class="ico"><use href="#i-surface"/></svg><span>Ray Trajectories (gop)</span></li>
      <li class="d2" role="treeitem"><svg class="tw"></svg><svg class="ico"><use href="#t-export"/></svg><span>Export</span></li>
      <li class="d2" role="treeitem"><svg class="tw"></svg><svg class="ico"><use href="#t-report"/></svg><span>Reports</span></li>
    </ul>
  </section>

  <div class="right">
    <section class="pane graphics">
      <header class="ptabs"><button class="on">Graphics</button><button>Convergence Plot 1</button>
        <span class="pctl"><svg class="caret"><use href="#i-caret"/></svg><svg class="pin"><use href="#i-pin"/></svg></span></header>
      <div class="gtools">
        <button aria-label="Zoom in"><svg class="ico"><use href="#g-zin"/></svg></button>
        <button aria-label="Zoom out"><svg class="ico"><use href="#g-zout"/></svg></button>
        <button aria-label="Zoom box"><svg class="ico"><use href="#g-zbox"/></svg></button>
        <button aria-label="Zoom extents"><svg class="ico"><use href="#g-fit"/></svg></button>
        <span class="gsep"></span>
        <button aria-label="Default view"><svg class="ico"><use href="#g-axes"/></svg><svg class="caret"><use href="#i-caret"/></svg></button>
        <button aria-label="Show grid"><svg class="w14"><use href="#g-grid"/></svg></button>
        <button aria-label="Show legends"><svg class="w14"><use href="#g-legend"/></svg></button>
        <span class="gsep"></span>
        <button aria-label="Image snapshot"><svg class="ico"><use href="#g-camera"/></svg></button>
        <button aria-label="Print"><svg class="ico"><use href="#g-print"/></svg></button>
      </div>
      <svg class="plot" viewBox="297 155 757 432" role="img" aria-label="Ray Trajectories, Lenses and Surrounding Air Domain">
        <defs>
          <linearGradient id="beam" gradientUnits="userSpaceOnUse" x1="413" y1="0" x2="969" y2="0">
            <stop offset="0" stop-color="#39ffff"/><stop offset=".03" stop-color="#00aaff"/><stop offset=".075" stop-color="#0000ff"/>
            <stop offset=".13" stop-color="#0000c8"/><stop offset=".18" stop-color="#000090"/><stop offset=".76" stop-color="#000090"/>
            <stop offset=".82" stop-color="#0000c0"/><stop offset=".86" stop-color="#0000f5"/><stop offset=".91" stop-color="#0058ff"/>
            <stop offset=".94" stop-color="#00a8ff"/><stop offset=".97" stop-color="#0070ff"/><stop offset="1" stop-color="#0010ff"/>
          </linearGradient>
          <linearGradient id="jet" x1="0" y1="1" x2="0" y2="0">
            <stop offset="0" stop-color="#000083"/><stop offset=".125" stop-color="#0000ff"/><stop offset=".375" stop-color="#00ffff"/>
            <stop offset=".625" stop-color="#ffff00"/><stop offset=".875" stop-color="#ff0000"/><stop offset="1" stop-color="#7f0000"/>
          </linearGradient>
        </defs>
        <text x="657" y="174" text-anchor="middle">Ray Trajectories, Lenses and Surrounding Air Domain</text>
        <g id="lenses"></g>
        <path d="M413 376L460 370L500 364L525 363L740 363L829 364.500L860 366.500L893 372L933 375.800L969 371V381.500L933 376.800L893 381L860 386L829 388.500L740 389L525 389L500 388L460 383L413 377z" fill="url(#beam)"/>
        <path id="mesh"></path>
        <rect class="domain" x="348" y="221" width="621" height="310"/>
        <path d="M412 375.500h2v2h-2z" fill="#c33"/>
        <rect x="964" y="367" width="10" height="18" rx="5" fill="#0000e6"/>
        <rect class="frame" x="333" y="182.500" width="652" height="388"/>
        <path id="ticks"></path>
        <g id="labels"></g>
        <rect x="1001.500" y="206.500" width="11" height="359" fill="url(#jet)" stroke="#111" stroke-width=".8"/>
        <use href="#i-logo" x="1035" y="159" width="15" height="13"/>
      </svg>
    </section>

    <section class="pane messages">
      <header class="ptabs"><button class="on">Messages</button><button>Progress</button><button>Log</button><button>Table</button>
        <span class="pctl"><svg class="caret"><use href="#i-caret"/></svg><svg class="pin"><use href="#i-pin"/></svg><svg class="pin" viewBox="0 0 8 8"><path d="M1 1l6 6M7 1L1 7" stroke="currentColor"/></svg></span></header>
      <div class="mtools"><button aria-label="Clear messages"><svg class="ico"><use href="#i-broom"/></svg></button></div>
      <textarea class="log" aria-label="Messages" readonly></textarea>
    </section>
  </div>
</main>

<footer class="status"><span>860 MB | 952 MB</span></footer>
<script src="plot.js"></script>
</body>
</html>
```
FILE: styles.css
```css
* { box-sizing: border-box; }
html, body { height: 100%; }
body { margin: 0; display: flex; flex-direction: column; background: #fafbff; color: #111; font: 9px/13px "Noto Sans", "Open Sans", sans-serif; overflow: hidden; }
button { appearance: none; border: 0; padding: 0; margin: 0; background: none; color: inherit; font: inherit; display: inline-flex; align-items: center; }
h1, h2 { margin: 0; font: inherit; font-weight: 400; }
svg { flex: none; display: block; }
.defs { position: absolute; width: 0; height: 0; }
.ico { width: 12px; height: 12px; }
.caret { width: 6px; height: 4px; }
.mini { width: 4px; height: 3px; display: inline-block; vertical-align: middle; }
.pin { width: 7px; height: 9px; }
.w14 { width: 14px; height: 14px; }
.w20 { width: 20px; height: 20px; }
.w22 { width: 22px; height: 20px; }
.w24 { width: 24px; height: 20px; }

.titlebar { flex: none; height: 18px; display: flex; align-items: center; border-bottom: 1px solid #46566b; background: linear-gradient(90deg, #8faac9 0, #8aa4c4 100px, #47586e 148px, #5d7490 172px, #8ca8ca 215px, #7c9cc3 290px, #6088b8 360px, #5d82af 60%, #5f86b6 80%, #7a98bf 100%); }
.quick { flex: 1; display: flex; align-items: center; }
.quick button { width: 18px; height: 16px; justify-content: center; }
.quick .narrow { width: 14px; }
.qsep { width: 1px; height: 11px; margin: 0 6px; background: #b4c5da; }
.wintitle { padding: 2px 3px 0; background: radial-gradient(closest-side, #a9bfd9 40%, transparent); }
.winbtns { flex: 0 0 30%; display: flex; justify-content: flex-end; align-self: flex-start; }
.winbtns button { width: 21px; height: 13px; justify-content: center; border: 1px solid #52627a; border-top: 0; background: linear-gradient(#c6d3e3, #7f97b5); }
.winbtns .close { width: 37px; background: linear-gradient(#dd9385, #b8382a); }
.winbtns svg { width: 12px; height: 10px; }

.tabs { flex: none; height: 21px; display: flex; align-items: flex-end; gap: 1px; padding: 0 4px 0 3px; color: #3a5a8c; z-index: 1; }
.tabs button { height: 18px; padding: 0 8px; border: 1px solid transparent; border-bottom: 0; }
.tabs .file { width: 43px; padding: 0; justify-content: center; gap: 3px; background: #2956a3; color: #fff; }
.tabs .on { height: 19px; padding: 0 6px; background: #fff; border-color: #bfd3e8; }
.tabs .help { width: 11px; height: 11px; padding: 0; margin: 0 3px 5px auto; justify-content: center; background: #3f78b5; color: #fff; }

.ribbon { flex: none; height: 69px; margin: -1px 3px 0; border: 1px solid #cbd9e8; background: #fdfeff; display: flex; padding: 2px 0 3px; }
.group { display: flex; flex-direction: column; border-right: 1px solid #cddae8; }
.group h2 { text-align: center; color: #777; line-height: 10px; }
.cmds { flex: 1; display: flex; align-items: flex-start; }
.g-plot { width: 77px; padding-left: 6px; }
.g-add { width: 303px; padding-left: 8px; }
.g-attr { width: 142px; padding-left: 8px; }
.g-sel { width: 133px; padding-left: 5px; }
.g-exp { width: 92px; padding-left: 4px; }
.col { display: flex; flex-direction: column; align-items: flex-start; gap: 2px; }
.col button { height: 15px; gap: 1px; white-space: nowrap; }
.col button:disabled { color: #aaa; }
.dim { opacity: .4; }
.c1 { width: 98px; }
.c2 { width: 63px; }
.c3 { width: 97px; }
.c4 { width: 92px; }
.big { flex-direction: column; min-width: 33px; padding-top: 4px; gap: 3px; line-height: 11px; text-align: center; }
.g-sel .col button { padding: 0 2px; border: 1px solid transparent; }
.g-sel .col .active { background: #9bd0fc; border-color: #3c9be9; }

.work { flex: 1; min-height: 0; display: flex; padding: 3px 2px 2px 0; }
.rail { width: 22px; padding-top: 4px; display: flex; flex-direction: column; align-items: center; gap: 7px; color: #2b4d80; }
.rail button { writing-mode: vertical-rl; }
.builder { width: 270px; margin-right: 4px; border: 1px solid #aed8f8; padding: 3px 3px 5px; display: flex; flex-direction: column; }
.builder header { display: flex; align-items: center; gap: 5px; height: 22px; padding: 0 0 0 3px; color: #444; }
.builder h2 { flex: 1; font: 300 15px/22px "Open Sans", "Noto Sans", sans-serif; color: #2f93e0; }
.btools { display: flex; align-items: center; gap: 6px; height: 15px; margin-bottom: 2px; padding-left: 2px; }
.btools button { gap: 6px; }
.tree { flex: 1; min-height: 0; margin: 0; padding: 0 4px; list-style: none; background: #fff; border: 1px solid #ccced3; overflow: hidden; }
.tree li { display: flex; align-items: center; height: 13px; white-space: nowrap; }
.tree span { padding: 0 2px; }
.tree .tw { width: 6px; height: 6px; margin-right: 6px; }
.d1 { padding-left: 14px; }
.d2 { padding-left: 29px; }
.d3 { padding-left: 43px; }
.selected span { background: #9fd1fb; }

.right { flex: 1; min-width: 0; display: flex; flex-direction: column; gap: 4px; }
.pane { border: 1px solid #d9dce3; display: flex; flex-direction: column; }
.graphics { flex: 1; min-height: 0; }
.ptabs { flex: none; display: flex; align-items: flex-end; gap: 6px; height: 22px; padding: 0 3px; border-bottom: 1px solid #dfe2e8; font: 10px/14px "Noto Sans", "Open Sans", sans-serif; }
.ptabs button { height: 17px; padding: 0 2px; background: #ebebea; }
.ptabs .on { height: 18px; margin-bottom: -1px; background: #fafbff; color: #3d68b0; border: 1px solid #dcdfe6; border-bottom: 0; }
.pctl { margin-left: auto; display: flex; align-items: center; gap: 5px; height: 16px; color: #c1c6d2; }
.gtools { flex: none; display: flex; align-items: center; height: 22px; padding-left: 4px; gap: 6px; }
.gtools button { gap: 5px; }
.gsep { width: 1px; height: 12px; margin: 0 3px; background: #d3d6dc; }
.plot { flex: 1; min-height: 0; width: 100%; background: #fff; font: 9px "DejaVu Sans", sans-serif; fill: #111; }
#mesh { fill: none; stroke: #000; stroke-width: .8; }
#lenses { fill: #64fa64; }
#ticks, .frame { fill: none; stroke: #333; stroke-width: 1; }
.domain { fill: none; stroke: #6b6b6b; }
.messages { flex: none; height: 83px; padding-bottom: 3px; }
.mtools { height: 21px; padding: 4px 5px; }
.log { flex: 1; margin: 0 3px; border: 1px solid #dcdfe4; background: #fafbff; resize: none; font: inherit; }

.status { flex: none; height: 21px; display: flex; align-items: center; justify-content: flex-end; padding: 3px 256px 0 0; background: #f0ecec; }
```
FILE: plot.js
```js
// Axes, colour legend labels and the triangular mesh of the ray plot.
(() => {
const NS = 'http://www.w3.org/2000/svg';
const labels = document.getElementById('labels');

function label(x, y, text, anchor) {
  const t = document.createElementNS(NS, 'text');
  t.setAttribute('x', x);
  t.setAttribute('y', y);
  t.setAttribute('text-anchor', anchor);
  t.textContent = text;
  labels.appendChild(t);
}

let ticks = '';
for (let i = -2; i <= 7; i++) {
  const x = 503.5 + i * 62.1;
  ticks += `M${x} 570v-4M${x} 183v4`;
  label(x, 584, String(i * 2 / 100), 'middle');
}
for (let i = -6; i <= 6; i++) {
  const y = 376 - i * 31.1;
  ticks += `M333 ${y}h4M985 ${y}h-4`;
  label(330, y + 3, String(i / 100), 'end');
}
for (let i = 0; i < 8; i++) {
  const y = 206.5 + i * 45.4;
  ticks += `M1001 ${y}h2M1013 ${y}h-2`;
  label(1018, y + 3, String(6 - i / 2), 'start');
}
document.getElementById('ticks').setAttribute('d', ticks);

// Vertices of the coarse mesh, in mesh units.
const coarse = [
  113,156,218,142,313,136,402,139,490,142,588,127,686,130,784,137,887,135,976,130,1075,141,1170,142,1281,132,1368,107,1448,138,
  181,217,232,222,269,198,310,216,357,203,400,217,443,208,490,228,552,212,635,219,726,235,827,257,933,246,1015,213,1073,224,
  1118,210,1166,227,1226,219,1292,219,1364,200,1450,242,127,293,214,285,275,265,334,275,378,263,418,262,455,254,478,279,521,277,
  580,301,660,330,754,341,825,368,887,339,949,334,994,295,1042,279,1098,271,1135,255,1188,267,1225,285,1268,277,1323,270,1388,289,
  260,327,312,333,352,295,370,308,400,308,540,327,598,369,528,370,565,368,211,381,282,381,323,380,265,440,218,461,131,452,297,430,
  634,416,703,429,781,445,871,437,932,384,988,374,952,445,1010,433,1030,332,1071,326,1118,325,1307,310,1343,330,1378,358,1445,361,
  1290,345,1313,350,1342,402,1408,403,1065,371,1037,410,1386,445,1448,476,580,405,573,450,555,470,610,470,655,470,
  308,478,262,487,198,530,129,596,212,602,270,566,262,638,198,680,124,745,325,545,308,662,270,717,316,607,210,758,258,796,330,706,
  330,773,378,712,397,765,195,853,101,865,286,872,391,850,345,640,487,853,581,853,679,857,768,858,866,863,963,870,1061,879,
  1152,864,1241,870,1299,810,1355,869,1450,847,1465,717,1391,765,1336,768,1336,690,1392,660,1338,620,1391,570,1447,587,1350,483,
  444,784,488,773,536,787,581,771,638,777,719,745,818,752,918,765,1011,781,1097,791,1154,784,1203,800,1250,791,1290,740,1233,735,
  1182,730,1131,731,467,732,515,732,557,727,602,727,646,690,587,664,535,682,763,646,880,638,983,664,1070,700,1120,675,683,603,
  616,603,574,555,574,610,548,637,628,538,720,532,820,540,908,527,988,500,955,579,1012,575,1050,622,1063,570,437,712,434,740,
  490,687,1293,686,1250,680,1308,640,1320,590,1305,520,1330,540
];
const topEdge = [20,155,265,362,458,551,641,738,844,943,1038,1134,1229,1323,1420,1541];
const bottomEdge = [20,142,239,335,432,526,618,712,815,914,1010,1106,1202,1299,1406,1541];
const leftEdge = [207,362,507,653,803];
const rightEdge = [184,311,430,547,667,800];
topEdge.forEach(x => coarse.push(x, 33));
bottomEdge.forEach(x => coarse.push(x, 963));
leftEdge.forEach(y => coarse.push(20, y));
rightEdge.forEach(y => coarse.push(1541, y));

const points = [];
for (let i = 0; i < coarse.length; i += 2) {
  points.push({ x: 340 + coarse[i] / 2.45, y: 210 + coarse[i + 1] / 3, fixed: true });
}

const centers = [518.5, 829];
const outline = [];
const lensGroup = document.getElementById('lenses');
for (const cx of centers) {
  const ring = [];
  for (let i = 0; i < 62; i++) {
    const a = i / 62 * Math.PI * 2;
    const s = Math.sin(a), c = Math.cos(a);
    ring.push({ x: cx + 13.5 * Math.sign(c) * Math.pow(Math.abs(c), 0.9), y: 376 + 39 * s, fixed: true });
  }
  outline.push(ring);
  points.push(...ring);
  const shape = document.createElementNS(NS, 'polygon');
  shape.setAttribute('points', ring.map(p => p.x.toFixed(1) + ',' + p.y.toFixed(1)).join(' '));
  lensGroup.appendChild(shape);
}

let seed = 20157;
function rnd() {
  seed = (seed * 1103515245 + 12345) % 2147483648;
  return seed / 2147483648;
}

// Element size grows with the distance from the lens outline.
function size(x, y) {
  const k = x < 674 ? 0 : 1;
  const dx = (x - centers[k]) / 13.5, dy = (y - 376) / 39;
  if (dx * dx + dy * dy < 1) return 3.3;
  let best = 1e9;
  for (const p of outline[k]) best = Math.min(best, Math.hypot(p.x - x, p.y - y));
  return 3 + best * 0.06 + Math.max(0, best - 9) * 0.2;
}

for (const cx of centers) {
  for (let n = 0; n < 26000; n++) {
    const x = cx + (rnd() - 0.5) * 116, y = 376 + (rnd() - 0.5) * 160;
    const h = size(x, y);
    if (h > 11) continue;
    const r = h * 0.82;
    let free = true;
    for (const p of points) {
      if (Math.abs(p.x - x) < r && Math.hypot(p.x - x, p.y - y) < r) { free = false; break; }
    }
    if (free) points.push({ x, y, fixed: false });
  }
}

// Bowyer-Watson triangulation; points are sorted by x so finished triangles leave the search.
function triangulate(pts) {
  const order = pts.map((p, i) => i).sort((a, b) => pts[a].x - pts[b].x || pts[a].y - pts[b].y);
  const n = pts.length;
  const all = pts.concat([{ x: -9000, y: -9000 }, { x: 660, y: 15000 }, { x: 10300, y: -9000 }]);
  const circle = (a, b, c) => {
    const A = all[a], B = all[b], C = all[c];
    const bx = B.x - A.x, by = B.y - A.y, cx = C.x - A.x, cy = C.y - A.y;
    const d = 2 * (bx * cy - by * cx) || 1e-9;
    const ux = (cy * (bx * bx + by * by) - by * (cx * cx + cy * cy)) / d;
    const uy = (bx * (cx * cx + cy * cy) - cx * (bx * bx + by * by)) / d;
    return { v: [a, b, c], x: A.x + ux, y: A.y + uy, r: ux * ux + uy * uy };
  };
  let open = [circle(n, n + 1, n + 2)];
  const done = [];
  for (const i of order) {
    const p = all[i], edges = new Map(), keep = [];
    for (const t of open) {
      const dx = p.x - t.x, dy = p.y - t.y;
      if (dx > 0 && dx * dx > t.r + 1e-6) { done.push(t); continue; }
      if (dx * dx + dy * dy > t.r) { keep.push(t); continue; }
      for (let k = 0; k < 3; k++) {
        const a = t.v[k], b = t.v[(k + 1) % 3];
        const key = Math.min(a, b) * 10000 + Math.max(a, b);
        edges.set(key, (edges.get(key) || 0) + 1);
      }
    }
    edges.forEach((count, key) => {
      if (count === 1) keep.push(circle(Math.floor(key / 10000), key % 10000, i));
    });
    open = keep;
  }
  return done.concat(open).filter(t => t.v.every(v => v < n));
}

function edgesOf(tris) {
  const set = new Set();
  for (const t of tris) {
    for (let k = 0; k < 3; k++) {
      const a = t.v[k], b = t.v[(k + 1) % 3];
      set.add(Math.min(a, b) * 10000 + Math.max(a, b));
    }
  }
  return [...set].map(key => [Math.floor(key / 10000), key % 10000]);
}

let edges = [];
for (let pass = 0; pass < 4; pass++) {
  edges = edgesOf(triangulate(points));
  if (pass === 3) break;
  const sum = points.map(() => [0, 0, 0]);
  for (const [a, b] of edges) {
    sum[a][0] += points[b].x; sum[a][1] += points[b].y; sum[a][2]++;
    sum[b][0] += points[a].x; sum[b][1] += points[a].y; sum[b][2]++;
  }
  points.forEach((p, i) => {
    if (!p.fixed && sum[i][2]) { p.x = sum[i][0] / sum[i][2]; p.y = sum[i][1] / sum[i][2]; }
  });
}
document.getElementById('mesh').setAttribute('d', edges.map(([a, b]) =>
  `M${points[a].x.toFixed(1)} ${points[a].y.toFixed(1)}L${points[b].x.toFixed(1)} ${points[b].y.toFixed(1)}`).join(''));
})();
```
